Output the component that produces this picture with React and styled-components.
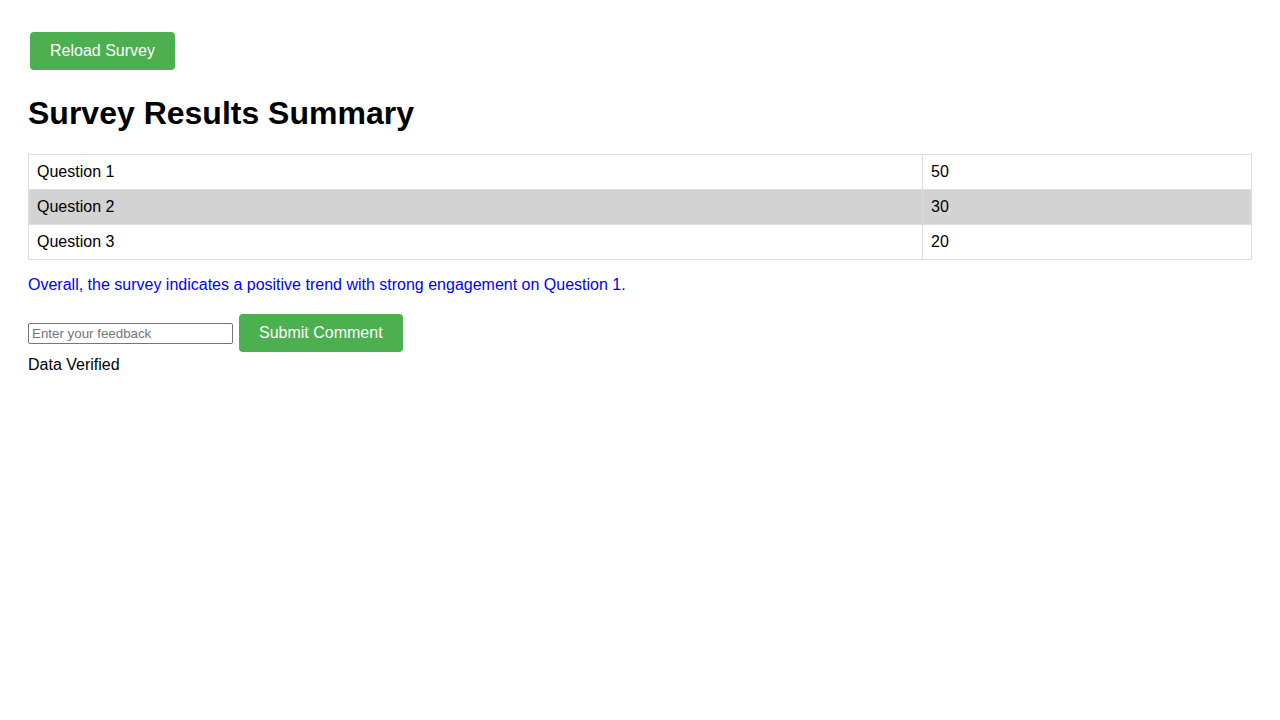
import React from "react";
import styled, { createGlobalStyle } from "styled-components";

const Global = createGlobalStyle`
  html, body { margin: 0; padding: 0; background: #fff; }
  body { margin: 8px; font-family: "Liberation Sans", Arial, sans-serif; color: #000; }
`;

const Page = styled.div`
  padding: 20px;
  font-size: 16px;
`;

const Button = styled.button`
  background: #4caf50;
  color: #fff;
  border: none;
  border-radius: 4px;
  padding: 10px 20px;
  margin: 4px 2px;
  font-family: "Liberation Sans", Arial, sans-serif;
  font-size: 16px;
  line-height: 18px;
  cursor: pointer;
`;

const TopBar = styled.div`
  display: flex;
`;

const Title = styled.h1`
  font-size: 32px;
  font-weight: bold;
  margin: 21.44px 0;
  line-height: normal;
`;

const Table = styled.table`
  width: 100%;
  border-collapse: collapse;
`;

const Row = styled.tr`
  background: ${(p) => (p.$shaded ? "#d3d3d3" : "transparent")};
`;

const Cell = styled.td`
  border: 1px solid #ddd;
  padding: 8px;
  text-align: left;
  font-size: 16px;
  line-height: 18px;
  width: ${(p) => p.$w || "auto"};
`;

const Summary = styled.p`
  color: #0000ff;
  margin: 16px 0;
  line-height: 18px;
`;

const FormRow = styled.div`
  display: flex;
  align-items: center;
`;

const Input = styled.input`
  box-sizing: border-box;
  width: 205px;
  height: 21px;
  border: 1px solid #767676;
  border-radius: 2px;
  padding: 1px 3px;
  margin: 2px 4px 0 0;
  font-family: "Liberation Sans", Arial, sans-serif;
  font-size: 13.33px;
  &::placeholder { color: #757575; }
`;

const Status = styled.div`
  line-height: 18px;
`;

const rows = [
  ["Question 1", 50],
  ["Question 2", 30],
  ["Question 3", 20],
];

export default function App() {
  return (
    <>
      <Global />
      <Page>
        <TopBar>
          <Button>Reload Survey</Button>
        </TopBar>
        <Title>Survey Results Summary</Title>
        <Table>
          <tbody>
            {rows.map(([q, v], i) => (
              <Row key={q} $shaded={i === 1}>
                <Cell $w="877px">{q}</Cell>
                <Cell>{v}</Cell>
              </Row>
            ))}
          </tbody>
        </Table>
        <Summary>Overall, the survey indicates a positive trend with strong engagement on Question 1.</Summary>
        <FormRow>
          <Input placeholder="Enter your feedback" />
          <Button>Submit Comment</Button>
        </FormRow>
        <Status>Data Verified</Status>
      </Page>
    </>
  );
}
